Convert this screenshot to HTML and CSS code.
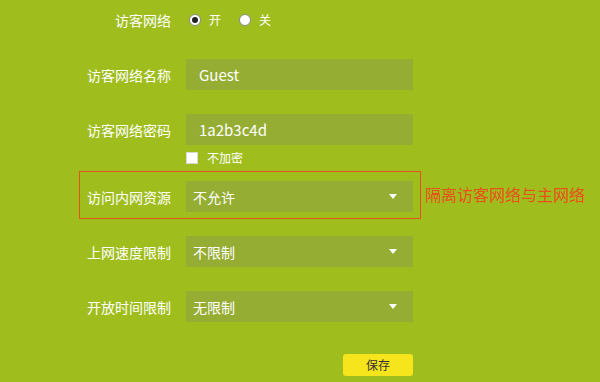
FILE: index.html
```html
<!DOCTYPE html>
<html lang="zh-CN">
<head>
<meta charset="utf-8">
<link rel="stylesheet" href="styles.css">
</head>
<body>
<div class="form">
  <div class="row row-radio">
    <div class="label">访客网络</div>
    <div class="radios">
      <span class="radio checked"></span><span class="opt">开</span>
      <span class="radio"></span><span class="opt">关</span>
    </div>
  </div>
  <div class="row row-name">
    <div class="label">访客网络名称</div>
    <div class="field input">Guest</div>
  </div>
  <div class="row row-pwd">
    <div class="label">访客网络密码</div>
    <div class="field input">1a2b3c4d</div>
  </div>
  <div class="check-row">
    <span class="checkbox"></span><span class="check-text">不加密</span>
  </div>
  <div class="highlight-line">
    <div class="highlight">
      <div class="row">
        <div class="label">访问内网资源</div>
        <div class="field select">不允许<span class="arrow"></span></div>
      </div>
    </div>
    <div class="note">隔离访客网络与主网络</div>
  </div>
  <div class="row row-speed">
    <div class="label">上网速度限制</div>
    <div class="field select">不限制<span class="arrow"></span></div>
  </div>
  <div class="row row-time">
    <div class="label">开放时间限制</div>
    <div class="field select">无限制<span class="arrow"></span></div>
  </div>
  <div class="actions">
    <button class="save">保存</button>
  </div>
</div>
</body>
</html>
```
FILE: styles.css
```css
html, body {
  margin: 0;
  padding: 0;
}
body {
  width: 600px;
  height: 382px;
  overflow: hidden;
  background: #9fbe1e;
  font-family: "Noto Sans CJK SC", "Noto Sans", sans-serif;
  color: #ffffff;
}
.form {
  margin-left: 80px;
  display: flex;
  flex-direction: column;
}
.row {
  display: flex;
  align-items: center;
  height: 31px;
}
.label {
  width: 91px;
  text-align: right;
  font-size: 14px;
  line-height: 20px;
  flex-shrink: 0;
}
.field {
  margin-left: 15px;
  width: 227px;
  height: 31px;
  background: #96ad34;
  box-sizing: border-box;
  display: flex;
  align-items: center;
  font-size: 15px;
}
.input {
  padding-left: 13px;
}
.select {
  padding-left: 7px;
  font-size: 14px;
  position: relative;
}
.arrow {
  position: absolute;
  right: 16px;
  top: 13px;
  width: 0;
  height: 0;
  border-left: 4px solid transparent;
  border-right: 4px solid transparent;
  border-top: 5px solid #ffffff;
}
.row-radio {
  margin-top: 4px;
}
.radios {
  margin-left: 18px;
  display: flex;
  align-items: center;
  font-size: 12px;
}
.radio {
  width: 10px;
  height: 10px;
  border: 1px solid #8a8a8a;
  border-radius: 50%;
  background: #ffffff;
  position: relative;
  box-sizing: content-box;
}
.radio.checked::after {
  content: "";
  position: absolute;
  left: 2px;
  top: 2px;
  width: 6px;
  height: 6px;
  border-radius: 50%;
  background: #222222;
}
.opt {
  margin-left: 8px;
  margin-right: 18px;
  font-size: 12px;
}
.row-name {
  margin-top: 24px;
}
.row-pwd {
  margin-top: 24px;
}
.check-row {
  margin-top: 7px;
  margin-left: 106px;
  display: flex;
  align-items: center;
  height: 12px;
}
.checkbox {
  width: 10px;
  height: 10px;
  background: #ffffff;
  border: 1px solid #d8d8d8;
}
.check-text {
  margin-left: 9px;
  font-size: 12px;
  line-height: 12px;
}
.highlight-line {
  display: flex;
  align-items: center;
  margin-top: 7px;
  margin-left: -1px;
}
.highlight {
  border: 1px solid #e0561a;
  padding: 9px 7px 6px 0;
}
.note {
  margin-left: 4px;
  color: #e8501a;
  font-size: 16px;
  line-height: 20px;
  margin-top: -2px;
}
.row-speed {
  margin-top: 17px;
}
.row-time {
  margin-top: 24px;
}
.actions {
  margin-top: 29px;
  margin-left: 263px;
}
.save {
  width: 70px;
  height: 22px;
  background: #f6e41d;
  border: none;
  border-radius: 3px;
  font-family: "Noto Sans CJK SC", sans-serif;
  font-size: 12px;
  color: #333333;
  padding: 0;
  line-height: 22px;
}
```
